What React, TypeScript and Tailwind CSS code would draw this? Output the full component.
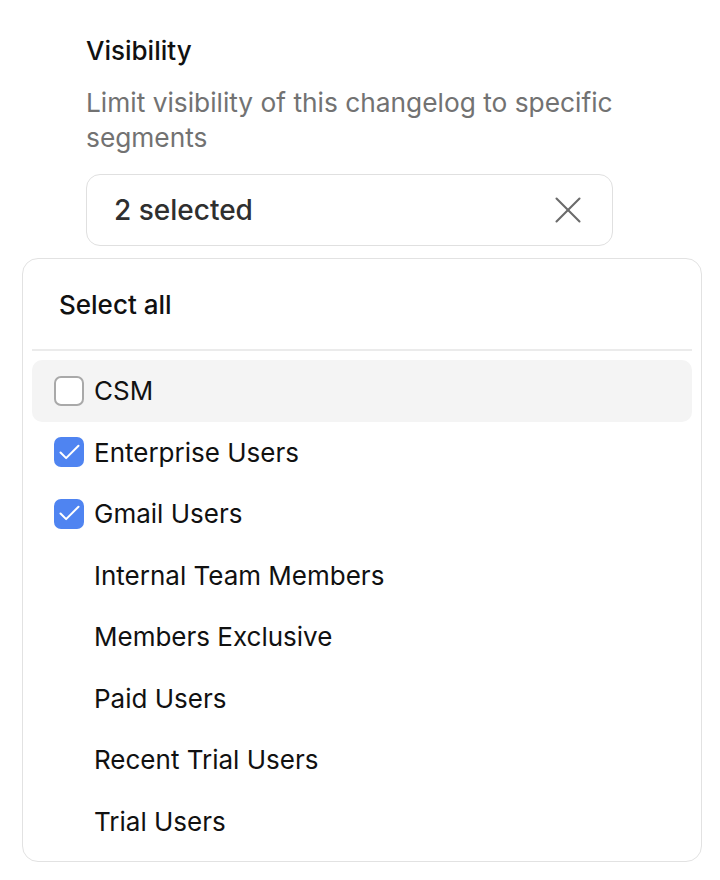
import { X, Check } from 'lucide-react'

const segments = [
  { name: 'CSM', checked: false, active: true },
  { name: 'Enterprise Users', checked: true },
  { name: 'Gmail Users', checked: true },
  { name: 'Internal Team Members' },
  { name: 'Members Exclusive' },
  { name: 'Paid Users' },
  { name: 'Recent Trial Users' },
  { name: 'Trial Users' },
]

type Segment = { name: string; checked?: boolean; active?: boolean }

function SegmentRow({ name, checked, active }: Segment) {
  const showBox = checked !== undefined
  return (
    <div
      className={`flex h-[61.5px] items-center gap-[10px] rounded-[10px] pl-[22px] ${active ? 'bg-[#f4f4f4]' : ''}`}
    >
      {showBox ? (
        checked ? (
          <span className="flex h-[30px] w-[30px] items-center justify-center rounded-[7px] bg-[#4f84f1]">
            <Check size={27} strokeWidth={1.8} className="text-white" />
          </span>
        ) : (
          <span className="h-[30px] w-[30px] rounded-[7px] border-2 border-[#a9a9a9] bg-white" />
        )
      ) : (
        <span className="w-[30px]" />
      )}
      <span className="text-[26px] text-[#111]">{name}</span>
    </div>
  )
}

export default function App() {
  return (
    <div className="min-h-screen bg-white font-['Inter',sans-serif]">
      <div className="pl-[86px] pr-[100px] pt-[35px]">
        <h3 className="text-[26px] font-medium leading-[32px] text-[#111]">Visibility</h3>
        <p className="mt-[18px] text-[26.3px] leading-[35px] text-[#727272]">
          Limit visibility of this changelog to specific segments
        </p>
        <div className="mr-[7px] mt-[19px] flex h-[72px] items-center justify-between rounded-[14px] border border-[#e0e0e0] pl-[27px] pr-[21px]">
          <span className="text-[28px] font-medium text-[#2f2f2f]">2 selected</span>
          <X size={46} strokeWidth={1.1} className="text-[#6b6b6b]" />
        </div>
      </div>

      <div className="ml-[22px] mt-[12px] w-[680px] rounded-[16px] border border-[#e2e2e2] bg-white">
        <div className="flex h-[90px] items-center px-[36px]">
          <span className="text-[26px] font-medium text-[#111]">Select all</span>
        </div>
        <div className="mx-[9px] h-[2px] bg-[#ebebeb]" />
        <div className="px-[9px] pb-[9px] pt-[9px]">
          {segments.map((s) => (
            <SegmentRow key={s.name} {...s} />
          ))}
        </div>
      </div>
    </div>
  )
}
